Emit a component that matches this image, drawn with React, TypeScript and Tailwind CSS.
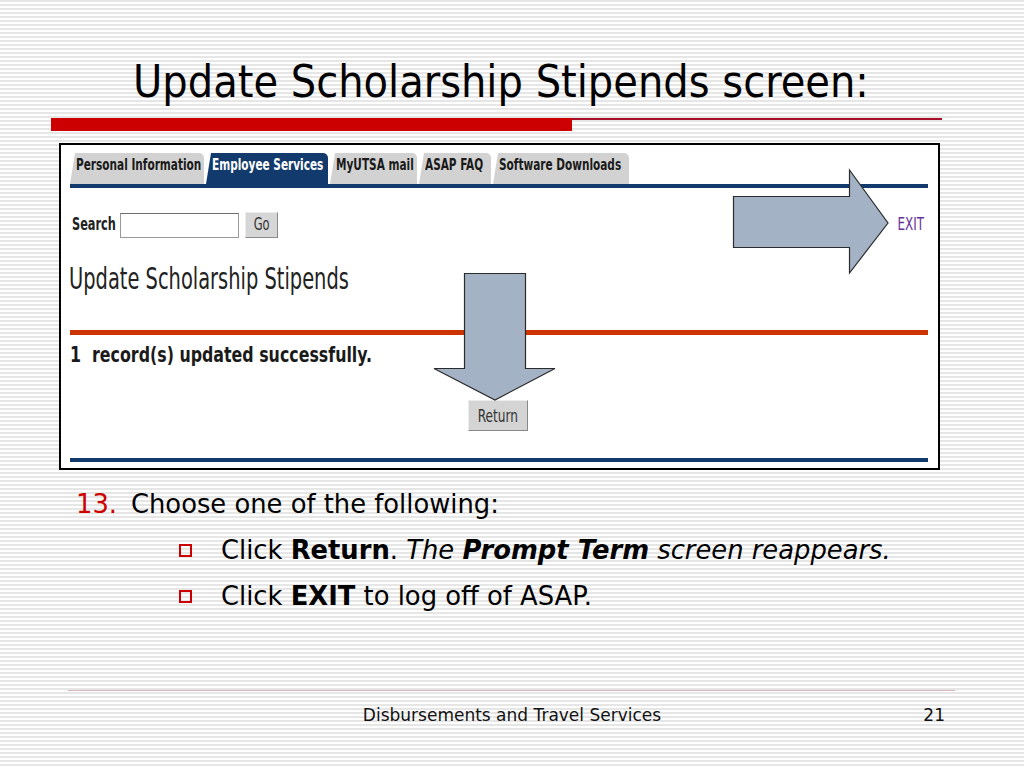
import React from "react";

const tabs = [
  { label: "Personal Information", w: "w-[134px]", active: false },
  { label: "Employee Services", w: "w-[122px]", active: true },
  { label: "MyUTSA mail", w: "w-[87px]", active: false },
  { label: "ASAP FAQ", w: "w-[72px]", active: false },
  { label: "Software Downloads", w: "w-[136px]", active: false },
];

// the web page in the slide was shrunk sideways, so its text is squeezed
const Sq = ({ children, className = "" }: { children: React.ReactNode; className?: string }) => (
  <span className={`inline-block whitespace-nowrap ${className}`}>{children}</span>
);

const Tab = ({ label, w, active }: { label: string; w: string; active: boolean }) => (
  <div
    className={`${w} h-[31px] pl-[6px] pt-[2px] rounded-tr-[5px] [clip-path:polygon(5px_0,100%_0,100%_100%,0_100%)] text-[15px] leading-[20px] font-bold whitespace-nowrap ${
      active ? "bg-[#123a6c] text-white" : "bg-[#d2d2d2] text-[#1a1a1a]"
    }`}
  >
    <Sq className="origin-left scale-x-[0.78]">{label}</Sq>
  </div>
);

const Bullet = () => (
  <span className="inline-block w-[13px] h-[13px] border-2 border-[#cc0000] shrink-0" />
);

export default function App() {
  return (
    <div className="relative w-[1024px] h-[768px] overflow-hidden bg-[repeating-linear-gradient(to_bottom,#e6e6e6_0px,#e6e6e6_2px,#ffffff_2px,#ffffff_4px)] font-['DejaVu_Sans_Condensed','DejaVu_Sans',sans-serif] text-black">
      {/* title */}
      <h1 className="pt-[56px] pl-[133px] text-[44.5px] leading-[52px] font-normal whitespace-nowrap">
        Update Scholarship Stipends screen:
      </h1>

      {/* red rule */}
      <div className="mt-[10px] ml-[51px] flex items-start">
        <div className="w-[521px] h-[13px] bg-[#cc0000]" />
        <div className="w-[370px] h-[2px] bg-[#a8102a]" />
      </div>

      {/* screenshot of the web page */}
      <div className="mt-[12px] ml-[59px] w-[881px] h-[327px] border-2 border-black bg-white pl-[9px] pr-[10px] pt-[8px]">
        <div className="flex items-end gap-[2px]">
          {tabs.map((t) => (
            <Tab key={t.label} {...t} />
          ))}
        </div>
        <div className="h-[4px] bg-[#123a6c]" />

        <div className="mt-[24px] flex items-center h-[26px]">
          <span className="w-[48px] ml-[2px] text-[17px] font-bold text-[#222]">
            <Sq className="origin-left scale-x-[0.74]">Search</Sq>
          </span>
          <div className="w-[119px] h-[25px] bg-white border border-[#9a9a9a] border-t-[#6e6e6e]" />
          <div className="ml-[6px] w-[33px] h-[26px] bg-[#d6d6d6] border border-[#ececec] border-r-[#8a8a8a] border-b-[#8a8a8a] flex items-center justify-center text-[17px] text-[#333]">
            <Sq className="scale-x-[0.75]">Go</Sq>
          </div>
          <span className="ml-auto mr-[4px] text-[17px] text-[#663399]">
            <Sq className="origin-right scale-x-[0.78]">EXIT</Sq>
          </span>
        </div>

        <div className="mt-[26px] -ml-[1px] text-[30px] leading-[30px] text-[#222]">
          <Sq className="origin-left scale-x-[0.72]">Update Scholarship Stipends</Sq>
        </div>

        <div className="mt-[36px] h-[5px] bg-[#cc3300]" />

        <div className="mt-[7px] text-[22px] leading-[26px] font-bold text-[#1a1a1a]">
          <Sq className="origin-left scale-x-[0.8]">1&nbsp; record(s) updated successfully.</Sq>
        </div>

        <div className="mt-[32px] ml-[398px] w-[60px] h-[31px] bg-[#d4d4d4] border border-[#ececec] border-r-[#888] border-b-[#888] flex items-center justify-center text-[18px] text-[#333]">
          <Sq className="scale-x-[0.75]">Return</Sq>
        </div>

        <div className="mt-[27px] h-[4px] bg-[#123a6c]" />
      </div>

      {/* instructions */}
      <div className="mt-[11px] text-[25.8px] leading-[46px] font-['DejaVu_Sans',sans-serif] whitespace-nowrap">
        <div className="flex">
          <span className="ml-[76px] w-[55px] text-[#cc0000]">13.</span>
          <span>Choose one of the following:</span>
        </div>
        <div className="flex items-center">
          <span className="ml-[179px] mr-[29px] flex"><Bullet /></span>
          <span>
            Click <b>Return</b>. <i>The <b>Prompt Term</b> screen reappears.</i>
          </span>
        </div>
        <div className="flex items-center">
          <span className="ml-[179px] mr-[29px] flex"><Bullet /></span>
          <span>
            Click <b>EXIT</b> to log off of ASAP.
          </span>
        </div>
      </div>

      {/* footer */}
      <div className="absolute left-[68px] right-[69px] top-[690px] h-[1px] bg-[#d7b9b9]" />
      <div className="absolute left-0 right-0 top-[704px] flex items-center text-[17px] leading-[22px] text-[#111] font-['DejaVu_Sans',sans-serif]">
        <span className="flex-1 text-center">Disbursements and Travel Services</span>
        <span className="absolute right-[79px]">21</span>
      </div>

      {/* callout arrows */}
      <svg className="absolute inset-0 pointer-events-none" width="1024" height="768" viewBox="0 0 1024 768">
        <polygon
          points="733.5,196.5 849.5,196.5 849.5,170 888,223 849.5,273 849.5,247.5 733.5,247.5"
          fill="#a3b2c5"
          stroke="#2b2b2b"
          strokeWidth="1.2"
        />
        <polygon
          points="464.5,273.5 525.5,273.5 525.5,368.5 555,368.5 495,400 434,368.5 464.5,368.5"
          fill="#a3b2c5"
          stroke="#2b2b2b"
          strokeWidth="1.2"
        />
      </svg>
    </div>
  );
}
